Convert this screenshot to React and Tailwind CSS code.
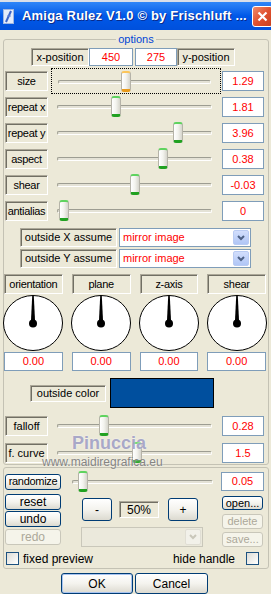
import React from "react";

const SLIDERS = [
  { label: "size", value: "1.29", thumb: 126, focused: true },
  { label: "repeat x", value: "1.81", thumb: 116 },
  { label: "repeat y", value: "3.96", thumb: 178 },
  { label: "aspect", value: "0.38", thumb: 163 },
  { label: "shear", value: "-0.03", thumb: 135 },
  { label: "antialias", value: "0", thumb: 64 },
];

const DIALS = ["orientation", "plane", "z-axis", "shear"];

// sunken static label
function Label({ children, className = "" }) {
  return (
    <div
      className={`flex items-center justify-center border border-t-[#aca899] border-l-[#aca899] border-b-white border-r-white shadow-[inset_1px_1px_0_#716f64] text-[11px] leading-none text-black whitespace-nowrap ${className}`}
    >
      {children}
    </div>
  );
}

function Edit({ value, className = "" }) {
  return (
    <div
      className={`flex items-center justify-center bg-white border border-[#7f9db9] text-[11px] leading-none text-[#ff0000] ${className}`}
    >
      {value}
    </div>
  );
}

function Slider({ thumb, focused, start = 51, className = "", trackClass = "left-[6px] right-[9px]" }) {
  return (
    <div
      className={`relative h-[26px] shrink-0 ${focused ? "border border-dotted border-black" : ""} ${className}`}
    >
      <div
        className={`absolute top-[11px] h-[4px] rounded-full border border-t-[#9d9d92] border-l-[#9d9d92] border-b-white border-r-white bg-[#e4e2d6] ${trackClass}`}
      />
      <div
        style={{ left: thumb - start - 5 - (focused ? 1 : 0) }}
        className={`absolute top-[2px] h-[21px] w-[10px] rounded-[3px] border-x border-x-[#b5b3a8] border-t-2 border-b-[3px] bg-linear-to-r from-white via-[#f3f3ee] to-[#d6d5cc] ${
          focused ? "border-t-[#fbc55a] border-b-[#e89a1c]" : "border-t-[#5fd35f] border-b-[#21a121]"
        }`}
      />
    </div>
  );
}

function Chevron({ color }) {
  return (
    <svg width="8" height="6" viewBox="0 0 8 6">
      <path d="M1 1 L4 4 L7 1" stroke={color} strokeWidth="2" fill="none" />
    </svg>
  );
}

function Combo({ value, disabled, className = "" }) {
  return (
    <div
      className={`flex items-center border ${
        disabled ? "bg-[#ebe9dc] border-[#c9c7ba]" : "bg-white border-[#7f9db9]"
      } ${className}`}
    >
      <span className="flex-1 pl-[3px] text-[11px] leading-none text-[#ff0000]">{value}</span>
      <div
        className={`mr-px flex h-[calc(100%-2px)] w-[16px] items-center justify-center rounded-[2px] border ${
          disabled
            ? "border-[#e0ded4] bg-[#f2f1ea]"
            : "border-[#b9cbf3] bg-linear-to-b from-[#d2defc] to-[#b0c6f6]"
        }`}
      >
        <Chevron color={disabled ? "#c9c7ba" : "#4d6185"} />
      </div>
    </div>
  );
}

function Btn({ children, disabled, isDefault, className = "" }) {
  return (
    <button
      type="button"
      className={`flex items-center justify-center whitespace-nowrap rounded-[3px] border leading-none ${
        disabled
          ? "border-[#c9c7ba] bg-[#f5f4ea] text-[#aca899]"
          : "border-[#003c74] bg-linear-to-b from-white via-[#f4f3ee] to-[#dcdad0] text-black"
      } ${isDefault ? "shadow-[inset_0_0_0_1px_#a8c4f0]" : ""} ${className}`}
    >
      {children}
    </button>
  );
}

function Check() {
  return (
    <div className="h-[13px] w-[13px] shrink-0 border border-[#1c5180] bg-linear-to-br from-[#dcdcd7] to-white" />
  );
}

function Dial() {
  return (
    <svg width="60" height="56" viewBox="0 0 60 56" className="block">
      <ellipse cx="30" cy="28" rx="29.5" ry="27.5" fill="white" stroke="black" />
      <polygon points="29.2,1 30.8,1 32,25 28,25" fill="black" />
      <circle cx="30" cy="28.5" r="4" fill="black" />
    </svg>
  );
}

function TitleBar() {
  return (
    <>
      <div className="h-[2px] bg-[#d9dfe9]" />
      <div className="flex h-[28px] items-center overflow-hidden bg-linear-to-b from-[#2f86f8] via-[#0058e8] to-[#0050dc]">
        <svg width="11" height="15" viewBox="0 0 11 15" className="ml-[3px] shrink-0">
          <rect x="0.5" y="0.5" width="10" height="14" fill="#e4ecfa" stroke="#9fb6e0" />
          <path d="M8 2 L3 13" stroke="#3b64c8" strokeWidth="2" />
          <path d="M4 7 L8 7" stroke="#6a8ad8" strokeWidth="1" />
        </svg>
        <span className="ml-[8px] whitespace-nowrap text-[13px] font-bold tracking-[0.2px] text-white [text-shadow:1px_1px_0_#0a2a8a]">
          Amiga Rulez V1.0 © by Frischluft ...
        </span>
        <div className="ml-auto mr-[-2px] flex h-[21px] w-[21px] shrink-0 items-center justify-center rounded-[3px] border border-white bg-linear-to-br from-[#f08a6a] via-[#e0502e] to-[#c8401e]">
          <svg width="11" height="11" viewBox="0 0 11 11">
            <path d="M1.5 1.5 L9.5 9.5 M9.5 1.5 L1.5 9.5" stroke="white" strokeWidth="2.2" />
          </svg>
        </div>
      </div>
    </>
  );
}

export default function App() {
  return (
    <div className="relative h-[594px] w-[271px] overflow-hidden bg-[#ece9d8] font-['Liberation_Sans',Arial,sans-serif] text-black">
      <TitleBar />

      {/* options group */}
      <fieldset className="ml-[3px] mt-[3px] w-[266px] rounded-[3px] border border-[#c4c2b4] pb-px">
        <legend className="mx-auto px-[2px] text-[11px] leading-[12px] text-[#0046d5]">options</legend>

        <div className="ml-[27px] mt-[3px] flex h-[18px] items-stretch">
          <Label className="w-[58px]">x-position</Label>
          <Edit value="450" className="w-[44px]" />
          <Edit value="275" className="ml-[2px] w-[42px]" />
          <Label className="w-[58px]">y-position</Label>
        </div>

        <div className="mt-[5px] flex flex-col gap-[6px]">
          {SLIDERS.map((s) => (
            <div key={s.label} className="flex h-[20px] items-center">
              <Label className="ml-px h-[20px] w-[43px] tracking-[-0.3px]">{s.label}</Label>
              <Slider thumb={s.thumb} focused={s.focused} className="ml-[3px] w-[170px]" />
              <Edit value={s.value} className="ml-px h-[20px] w-[42px]" />
            </div>
          ))}
        </div>

        <div className="mt-[7px] flex flex-col gap-[2px]">
          <div className="ml-[16px] flex h-[19px]">
            <Label className="w-[97px]">outside X assume</Label>
            <Combo value="mirror image" className="ml-[2px] w-[132px]" />
          </div>
          <div className="ml-[16px] flex h-[19px]">
            <Label className="w-[97px]">outside Y assume</Label>
            <Combo value="mirror image" className="ml-[2px] w-[132px]" />
          </div>
        </div>

        <div className="mt-[6px] grid w-[262px] grid-cols-4 gap-x-[9px]">
          {DIALS.map((d) => (
            <div key={d} className="flex flex-col items-center">
              <Label className="h-[20px] w-full tracking-[-0.3px]">{d}</Label>
              <div className="mt-px">
                <Dial />
              </div>
              <Edit value="0.00" className="mt-px h-[19px] w-full" />
            </div>
          ))}
        </div>

        <div className="ml-[26px] mt-[7px] flex items-center">
          <Label className="h-[17px] w-[76px]">outside color</Label>
          <div className="ml-[4px] h-[30px] w-[104px] border border-black bg-[#004f9e]" />
        </div>

        <div className="mt-[8px] flex flex-col gap-[7px]">
          <div className="flex h-[20px] items-center">
            <Label className="ml-px h-[20px] w-[43px]">falloff</Label>
            <Slider thumb={104} className="ml-[3px] w-[170px]" />
            <Edit value="0.28" className="ml-px h-[20px] w-[42px]" />
          </div>
          <div className="flex h-[20px] items-center">
            <Label className="ml-px h-[20px] w-[43px]">f. curve</Label>
            <Slider thumb={137} className="ml-[3px] w-[170px]" />
            <Edit value="1.5" className="ml-px h-[20px] w-[42px]" />
          </div>
        </div>
      </fieldset>

      {/* bottom group */}
      <div className="ml-[3px] mt-[2px] w-[266px] rounded-[3px] border border-[#c4c2b4] pb-[3px]">
        <div className="mt-[4px] flex h-[19px] items-center">
          <Btn className="ml-px h-[16px] w-[56px] text-[11px] tracking-[-0.3px]">randomize</Btn>
          <Slider
            thumb={82}
            start={61}
            className="ml-px w-[159px]"
            trackClass="left-[10px] right-[8px]"
          />
          <Edit value="0.05" className="h-[19px] w-[43px]" />
        </div>

        <div className="mt-[3px] flex">
          <div className="ml-px flex w-[56px] flex-col">
            <Btn className="h-[16px] text-[12px]">reset</Btn>
            <Btn className="mt-px h-[16px] text-[12px]">undo</Btn>
            <Btn disabled className="mt-[2px] h-[16px] text-[12px]">redo</Btn>
          </div>

          <div className="ml-[20px] flex w-[122px] flex-col">
            <div className="mt-[4px] flex h-[23px] items-center">
              <Btn className="ml-px h-[23px] w-[30px] text-[12px]">-</Btn>
              <div className="ml-[7px] flex h-[17px] w-[40px] items-center justify-center border border-t-[#aca899] border-l-[#aca899] border-b-white border-r-white shadow-[inset_1px_1px_0_#716f64] text-[12px] leading-none">
                50%
              </div>
              <Btn className="ml-[9px] h-[23px] w-[30px] text-[12px]">+</Btn>
            </div>
            <Combo disabled value="" className="mt-[6px] h-[20px] w-[122px]" />
          </div>

          <div className="ml-[19px] mt-[2px] flex w-[41px] flex-col">
            <Btn className="h-[14px] text-[11px]">open...</Btn>
            <Btn disabled className="mt-[4px] h-[15px] text-[11px]">delete</Btn>
            <Btn disabled className="mt-[3px] h-[15px] text-[11px]">save...</Btn>
          </div>
        </div>

        <div className="mt-[5px] flex h-[13px] items-center">
          <div className="ml-[2px]">
            <Check />
          </div>
          <span className="ml-[4px] text-[12px] leading-none">fixed preview</span>
          <span className="ml-auto text-[12px] leading-none">hide handle</span>
          <div className="ml-[11px] mr-[9px]">
            <Check />
          </div>
        </div>
      </div>

      <div className="mt-[4px] flex">
        <Btn isDefault className="ml-[61px] h-[21px] w-[72px] text-[12px]">OK</Btn>
        <Btn className="ml-[2px] h-[21px] w-[73px] text-[12px]">Cancel</Btn>
      </div>

      {/* watermark overlay */}
      <div className="pointer-events-none absolute left-[72px] top-[434px] text-[18px] font-bold leading-none text-[#a2a2c6] opacity-90 [text-shadow:0_0_2px_white]">
        Pinuccia
      </div>
      <div className="pointer-events-none absolute left-[42px] top-[456px] text-[12px] leading-none text-[#7a7a7a] opacity-90 [text-shadow:0_0_2px_white]">
        www.maidiregrafica.eu
      </div>
    </div>
  );
}
